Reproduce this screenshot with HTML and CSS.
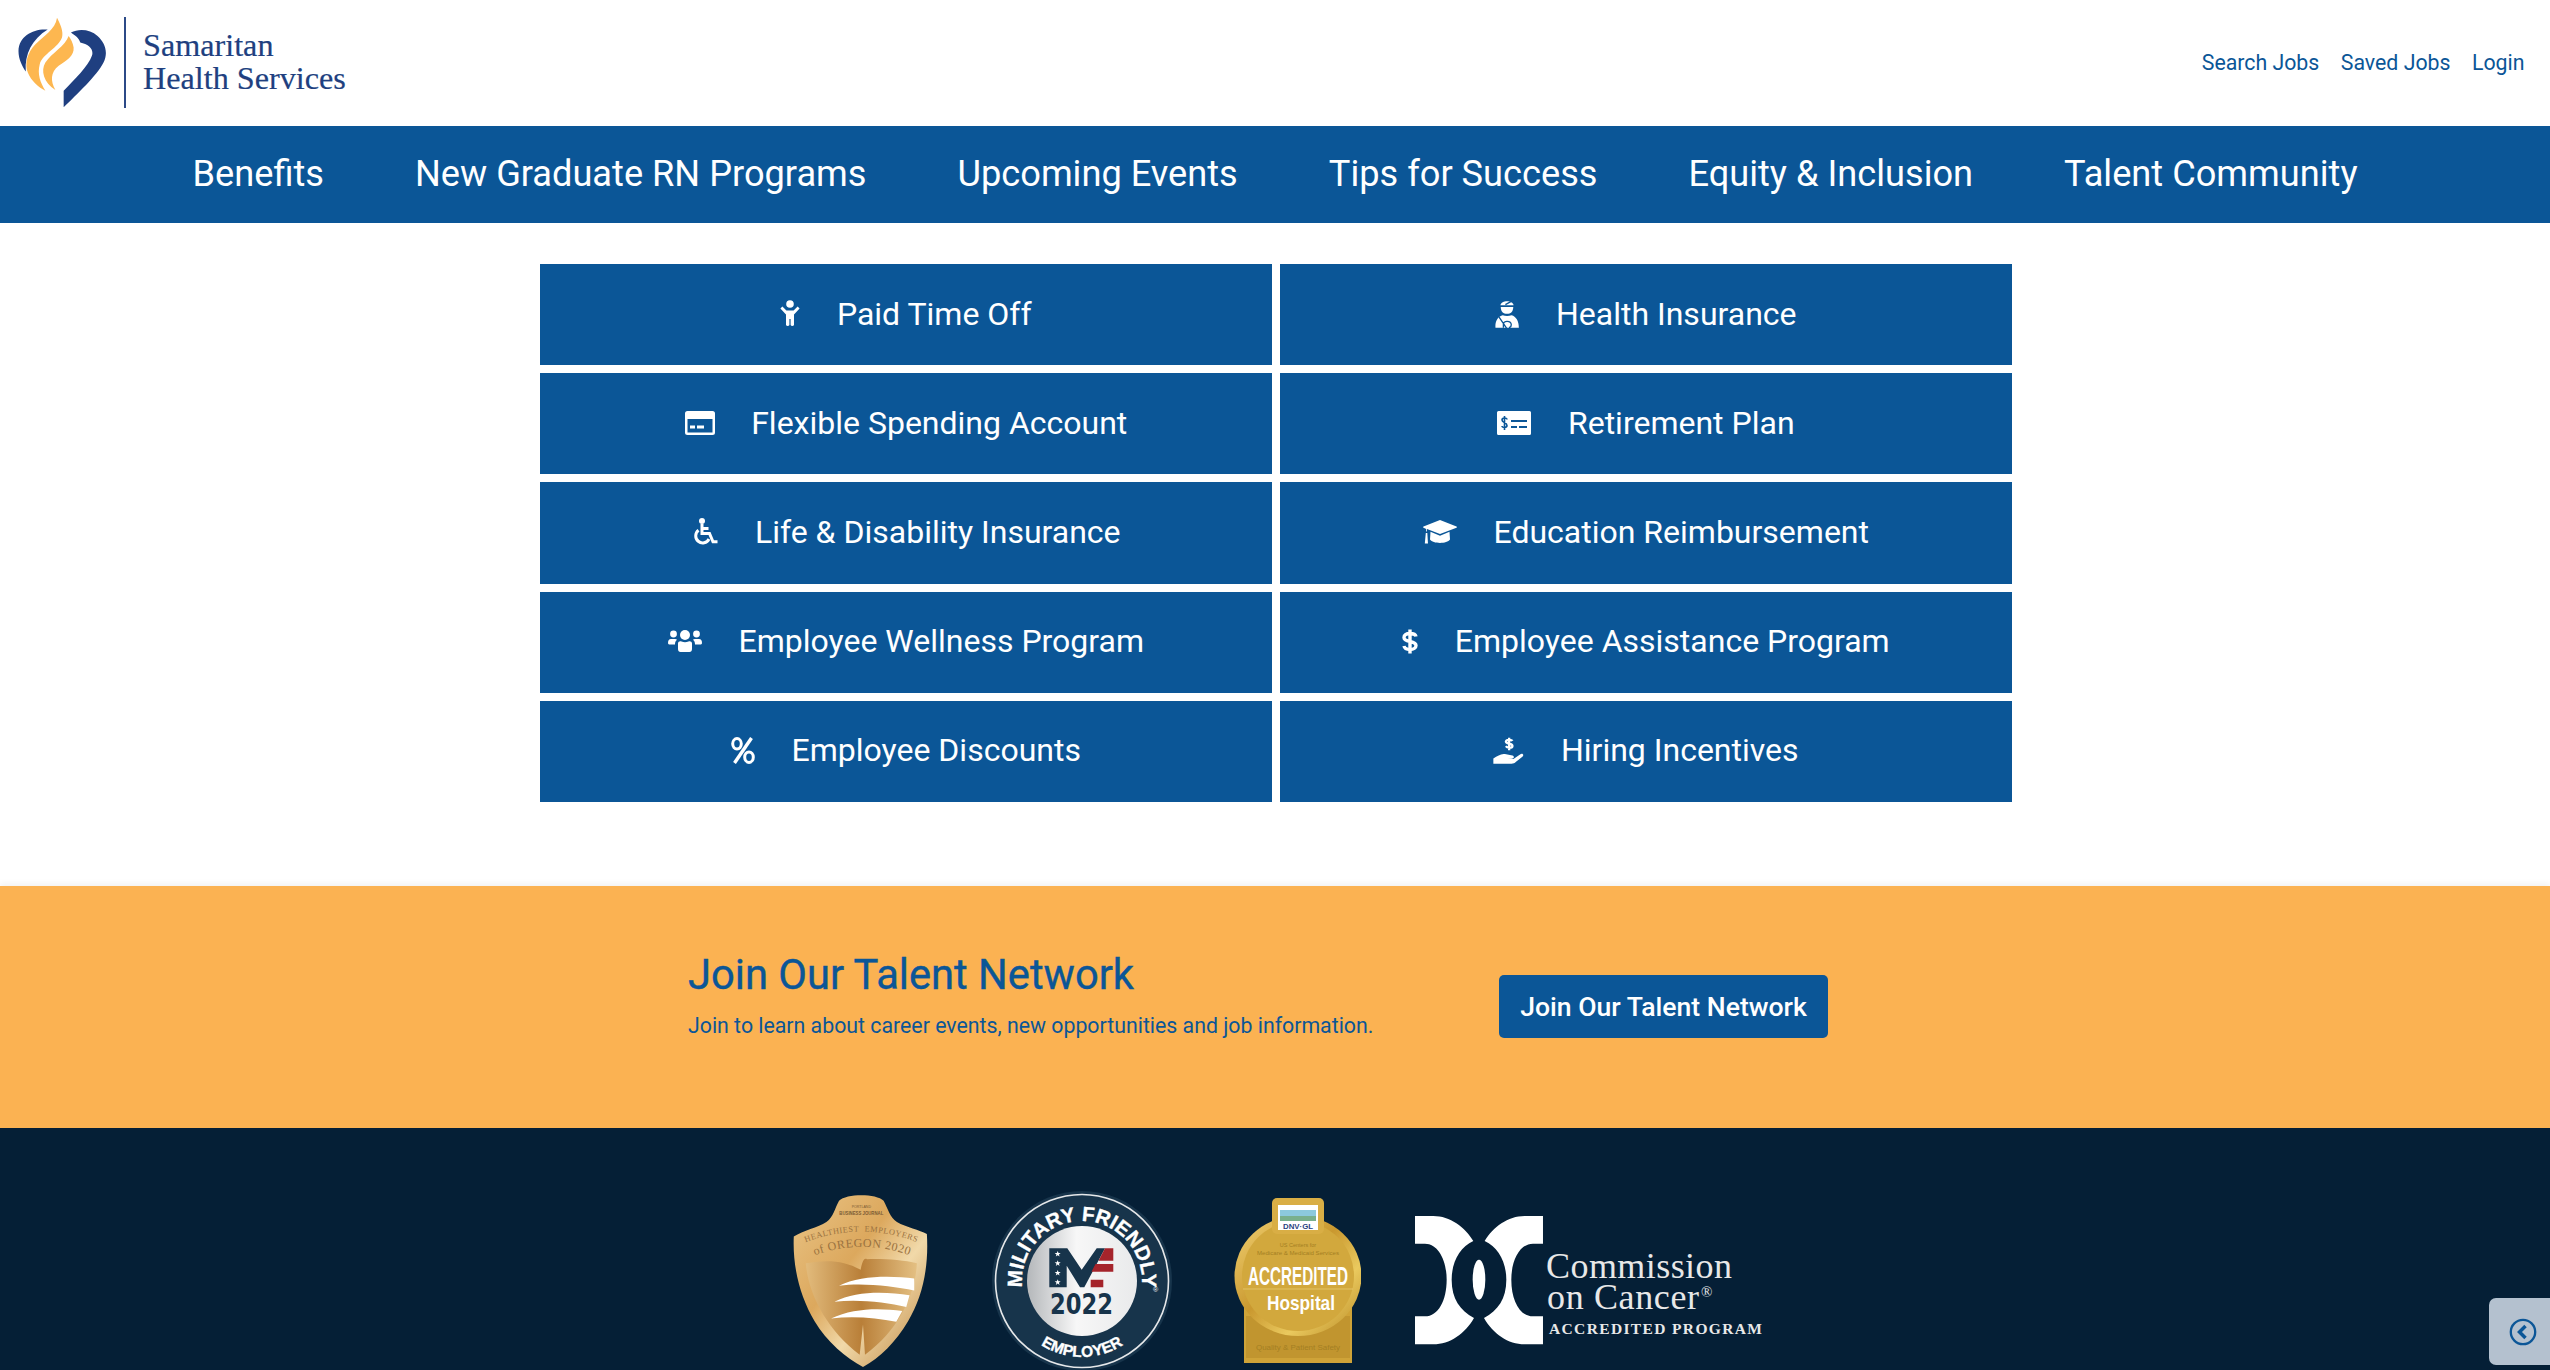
FILE: index.html
```html
<!DOCTYPE html>
<html lang="en">
<head>
<meta charset="utf-8">
<title>Benefits | Samaritan Health Services</title>
<link rel="stylesheet" href="styles.css">
</head>
<body>
<header class="topbar">
  <a class="brand" href="#">
    <svg class="brand-mark" viewBox="50 45 270 280" aria-hidden="true">
      <path class="logo-navy" d="M142 86C100 82 55 105 54 150C54 175 65 195 76 212C72 160 95 115 142 86Z"/>
      <path class="logo-gold" d="M170 50C165 85 130 105 105 130C80 155 72 190 82 215C92 240 115 260 135 270C120 245 110 220 118 190C126 160 175 140 185 110C190 90 180 70 170 50Z"/>
      <path class="logo-gold" d="M205 105C195 135 155 155 135 185C120 210 130 245 165 268C150 240 150 215 175 195C200 178 222 165 220 140C218 125 212 115 205 105Z"/>
      <path class="logo-navy" d="M212 95C235 82 270 85 292 105C315 125 325 155 310 185C290 225 230 280 190 320L190 270C220 240 265 195 275 165C282 145 265 130 240 125C235 110 225 105 212 95Z"/>
    </svg>
    <span class="brand-rule"></span>
    <span class="brand-name">Samaritan<br>Health Services</span>
  </a>
  <nav class="toplinks">
    <a href="#">Search Jobs</a>
    <a href="#">Saved Jobs</a>
    <a href="#">Login</a>
  </nav>
</header>

<nav class="mainnav">
  <a href="#">Benefits</a>
  <a href="#">New Graduate RN Programs</a>
  <a href="#">Upcoming Events</a>
  <a href="#">Tips for Success</a>
  <a href="#">Equity &amp; Inclusion</a>
  <a href="#">Talent Community</a>
</nav>

<main class="benefits">
  <div class="benefit-grid">
    <a class="benefit" href="#">
      <svg class="ic ic-child" viewBox="0 0 20 27" aria-hidden="true"><circle cx="10" cy="4" r="3.8"/><path d="M2.4 6.6L6.400 10.600H13.600L17.600 6.600L19.600 8.600L14 14.400V25A1.900 1.900 0 0 1 10.600 25V19H9.400V25A1.900 1.900 0 0 1 6 25V14.400L.4 8.600Z"/></svg>
      <span>Paid Time Off</span>
    </a>
    <a class="benefit" href="#">
      <svg class="ic ic-injured" viewBox="48 35 72 85" aria-hidden="true"><path d="M64 51C67 35 101 35 104 51Z"/><path class="ic-cut" d="M79 49L97 39"/><path d="M65 56H103C103 70 95 77 84 77C73 77 65 70 65 56Z"/><path d="M49 119C47 97 58 85 71 81C79 84 89 84 98 81C111 85 120 97 120 119Z"/><path class="ic-cut" d="M60 87L83 121M73 119V108C73 97 96 97 97 110C97 115 94 118 90 119"/></svg>
      <span>Health Insurance</span>
    </a>
    <a class="benefit" href="#">
      <svg class="ic ic-card" viewBox="0 0 30 24" aria-hidden="true"><path fill-rule="evenodd" d="M2.500 0H27.500A2.500 2.500 0 0 1 30 2.500V21.500A2.500 2.500 0 0 1 27.500 24H2.500A2.500 2.500 0 0 1 0 21.500V2.500A2.500 2.500 0 0 1 2.500 0ZM2.500 8V21.500H27.500V8ZM5 14.500H10V17.500H5ZM12 14.500H19V17.500H12Z"/></svg>
      <span>Flexible Spending Account</span>
    </a>
    <a class="benefit" href="#">
      <svg class="ic ic-check" viewBox="0 0 34 24" aria-hidden="true"><path fill-rule="evenodd" d="M1.500 0H32.500A1.500 1.500 0 0 1 34 1.500V22.500A1.500 1.500 0 0 1 32.500 24H1.500A1.500 1.500 0 0 1 0 22.500V1.500A1.500 1.500 0 0 1 1.500 0ZM14 9V11H30V9ZM14 15V17H20V15ZM22 15V17H30V15Z"/><path class="ic-cut ic-thin" d="M10 8.500C10 6.500 5 6.500 5 9C5 12 10 11 10 14.500C10 17 5 17 5 15M7.500 5V19"/></svg>
      <span>Retirement Plan</span>
    </a>
    <a class="benefit" href="#">
      <svg class="ic ic-wheel" viewBox="0 0 27 27" aria-hidden="true"><circle cx="11" cy="3" r="3"/><path class="ic-line" d="M11 6V15.500H18.500L22 23.800H26.500"/><path class="ic-line" d="M11 10.500H17.500M7.500 12.300A7 7 0 1 0 18 21"/></svg>
      <span>Life &amp; Disability Insurance</span>
    </a>
    <a class="benefit" href="#">
      <svg class="ic ic-grad" viewBox="0 0 34 27" aria-hidden="true"><path d="M17 2L33.500 8.500C34 8.800 34 9.400 33.500 9.700L17 16L4 11V13.500L3.200 13.500V11L.5 9.700C0 9.400 0 8.800.5 8.500Z"/><path d="M7.500 13.800L17 17.800L26.500 13.800L27 21.500C24 26 10 26 7 21.500Z"/><path d="M2.800 15H4.300L5 25.500H1.800Z"/></svg>
      <span>Education Reimbursement</span>
    </a>
    <a class="benefit" href="#">
      <svg class="ic ic-users" viewBox="0 0 34 24" aria-hidden="true"><circle cx="17" cy="6" r="5"/><circle cx="5.500" cy="5" r="3.400"/><circle cx="28.500" cy="5" r="3.400"/><path d="M10 14.500C10 12.500 12 12 13.500 12.500C16 13.500 18 13.500 20.500 12.500C22 12 24 12.500 24 14.500V20C24 22 23 23 21.500 23H12.500C11 23 10 22 10 20Z"/><path d="M0 14C0 11.500 1 10 3 10H7C8 10 8.600 10.300 9 10.800C7.500 12 7 13.500 7 15.500H2C1 15.500 0 15 0 14ZM34 14C34 11.500 33 10 31 10H27C26 10 25.400 10.300 25 10.800C26.500 12 27 13.500 27 15.500H32C33 15.500 34 15 34 14Z"/></svg>
      <span>Employee Wellness Program</span>
    </a>
    <a class="benefit" href="#">
      <svg class="ic ic-dollar" viewBox="0 0 16 27" aria-hidden="true"><path class="ic-line ic-heavy" d="M14 8.500C13.500 6 10.500 5.500 8 5.500C4 5.500 2 7.200 2 9.500C2 15 14 12 14 17.500C14 20 11.500 21.500 8 21.500C5 21.500 2.500 20.500 2 18M8 1.500V25.500"/></svg>
      <span>Employee Assistance Program</span>
    </a>
    <a class="benefit" href="#">
      <svg class="ic ic-percent" viewBox="0 0 24 27" aria-hidden="true"><ellipse class="ic-line" cx="6" cy="6.800" rx="4.300" ry="5.200"/><ellipse class="ic-line" cx="18" cy="20.200" rx="4.300" ry="5.200"/><path class="ic-line ic-heavy" d="M20.500 1L3.500 26"/></svg>
      <span>Employee Discounts</span>
    </a>
    <a class="benefit" href="#">
      <svg class="ic ic-hand" viewBox="27 28 92 82" aria-hidden="true"><path class="ic-line ic-dollar-small" d="M85 40C82 35 66 35 65 42C65 51 85 46 85 55C85 62 69 62 65 56M75 30V68"/><path d="M27 93C40 86 50 78 62 80L85 84C92 86 90 94 82 94H70L88 95L108 81C115 76 121 82 116 87L95 104C92 107 88 109 82 109H27Z"/></svg>
      <span>Hiring Incentives</span>
    </a>
  </div>
</main>

<section class="talent">
  <div class="talent-inner">
    <div class="talent-copy">
      <h2>Join Our Talent Network</h2>
      <p>Join to learn about career events, new opportunities and job information.</p>
    </div>
    <a class="talent-btn" href="#">Join Our Talent Network</a>
  </div>
</section>

<footer class="badges">
  <svg class="badge-shield" viewBox="100 42 405 520" role="img" aria-label="Healthiest Employers of Oregon 2020">
    <defs>
      <linearGradient id="goldShield" x1="0" x2="1" y1="0" y2="1">
        <stop offset="0" stop-color="#e9c486"/><stop offset=".4" stop-color="#dca85d"/><stop offset=".62" stop-color="#f1d9a9"/><stop offset="1" stop-color="#bd8540"/>
      </linearGradient>
      <linearGradient id="goldShieldIn" x1="0" x2="1" y1="0" y2="0">
        <stop offset="0" stop-color="#e2bb7c"/><stop offset=".5" stop-color="#b97f38"/><stop offset="1" stop-color="#e4c083"/>
      </linearGradient>
      <path id="shieldArc1" d="M135 188Q305 122 475 188"/>
      <path id="shieldArc2" d="M155 230Q305 172 460 230"/>
    </defs>
    <path fill="url(#goldShield)" d="M238 62C260 40 350 40 372 62C385 85 390 112 412 126C440 142 480 150 502 162C508 260 490 350 445 425C410 485 360 535 310 562C260 535 200 485 165 425C120 350 98 260 102 170C130 152 175 142 200 126C222 110 225 85 238 62Z"/>
    <path fill="url(#goldShieldIn)" d="M138 250C200 240 250 240 303 270C305 260 310 230 322 238C370 236 430 240 472 250C468 340 420 450 316 525L310 435L300 525C200 450 145 340 138 250Z"/>
    <path fill="#fff" d="M238 318C300 285 400 288 464 296V332C400 320 310 308 238 318ZM224 366C290 332 380 336 450 346L440 382C380 368 300 358 224 366ZM214 416C280 385 360 384 428 394L410 426C350 414 280 408 214 416Z"/>
    <text class="sh-pbj" x="305" y="84" text-anchor="middle" textLength="58" lengthAdjust="spacingAndGlyphs">PORTLAND</text>
    <text class="sh-pbj sh-bold" x="305" y="106" text-anchor="middle" textLength="132" lengthAdjust="spacingAndGlyphs">BUSINESS JOURNAL</text>
    <text class="sh-line"><textPath href="#shieldArc1" startOffset="50%" text-anchor="middle">HEALTHIEST&#160;&#160;EMPLOYERS</textPath></text>
    <text class="sh-line sh-big"><textPath href="#shieldArc2" startOffset="50%" text-anchor="middle">of OREGON 2020</textPath></text>
  </svg>

  <svg class="badge-mil" viewBox="0 0 180 180" role="img" aria-label="Military Friendly Employer 2022">
    <defs>
      <linearGradient id="silver" x1="0" x2="1" y1="0" y2="0">
        <stop offset="0" stop-color="#b4b7ba"/><stop offset=".45" stop-color="#f7f7f7"/><stop offset="1" stop-color="#e9eaeb"/>
      </linearGradient>
      <path id="milTop" d="M33.600 110.500A60 60 0 1 1 146.400 110.500"/>
      <path id="milBot" d="M41 148A76 76 0 0 0 139 148"/>
      <polygon id="milStar" points="0,-3 .8,-1 3,-1 1.200,.4 1.900,2.600 0,1.300 -1.900,2.600 -1.200,.4 -3,-1 -.8,-1"/>
    </defs>
    <circle cx="90" cy="90" r="90" fill="#17344b"/>
    <circle cx="90" cy="90" r="86.500" fill="none" stroke="#e6e8ea" stroke-width="1.600"/>
    <circle cx="90" cy="90" r="55" fill="url(#silver)"/>
    <text class="mil-arc"><textPath href="#milTop" startOffset="50%" text-anchor="middle">MILITARY FRIENDLY</textPath></text>
    <text class="mil-arc mil-arc-sm"><textPath href="#milBot" startOffset="50%" text-anchor="middle">EMPLOYER</textPath></text>
    <text class="mil-reg" x="161" y="101">®</text>
    <path fill="#17344b" d="M57.300 57.300H75.300L89.700 78.700L104.700 57.300H113L92.300 96.300H88L74.700 74.700V96.300H57.300Z"/>
    <path fill="#a5242b" d="M113 57.300H121.300V69.700H106.500ZM103.500 73H121.300V80.700H99.500ZM98.700 88.700H111.300V96.300H98.700Z"/>
    <g fill="#fff"><use href="#milStar" x="65.700" y="63"/><use href="#milStar" x="65.700" y="72.300"/><use href="#milStar" x="65.700" y="82"/><use href="#milStar" x="65.700" y="91.300"/></g>
    <text class="mil-year" x="89.500" y="123" text-anchor="middle" textLength="63" lengthAdjust="spacingAndGlyphs">2022</text>
  </svg>

  <svg class="badge-acc" viewBox="0 0 127 165" role="img" aria-label="DNV GL Accredited Hospital">
    <defs>
      <linearGradient id="goldAcc" x1="0" x2="1" y1="0" y2="1">
        <stop offset="0" stop-color="#f2d274"/><stop offset=".45" stop-color="#c9982f"/><stop offset=".7" stop-color="#eac95e"/><stop offset="1" stop-color="#b98a24"/>
      </linearGradient>
    </defs>
    <rect x="10" y="105" width="108" height="60" fill="#cfa338"/>
    <rect x="12" y="118" width="104" height="42" fill="#c1952f"/>
    <ellipse cx="64" cy="78" rx="63.500" ry="60" fill="url(#goldAcc)"/>
    <ellipse cx="64" cy="78" rx="56" ry="55" fill="#d2a83d"/>
    <rect x="38" y="0" width="52" height="36" rx="5" fill="#d9ae45"/>
    <rect x="44" y="7" width="40" height="25" fill="#fff"/>
    <rect x="46" y="12" width="36" height="6" fill="#8cc9dc"/>
    <rect x="46" y="18" width="36" height="5" fill="#79b08c"/>
    <text class="acc-dnv" x="64" y="30.500" text-anchor="middle" textLength="30" lengthAdjust="spacingAndGlyphs">DNV·GL</text>
    <text class="acc-tiny" x="64" y="49" text-anchor="middle">US Centers for</text>
    <text class="acc-tiny" x="64" y="57" text-anchor="middle" textLength="82" lengthAdjust="spacingAndGlyphs">Medicare &amp; Medicaid Services</text>
    <text class="acc-main" x="64" y="87" text-anchor="middle" textLength="100" lengthAdjust="spacingAndGlyphs">ACCREDITED</text>
    <path d="M9 91H119" stroke="#e7c96f" stroke-width=".8"/>
    <text class="acc-sub" x="67" y="112" text-anchor="middle" textLength="68" lengthAdjust="spacingAndGlyphs">Hospital</text>
    <text class="acc-qual" x="64" y="152" text-anchor="middle" textLength="84" lengthAdjust="spacingAndGlyphs">Quality &amp; Patient Safety</text>
  </svg>

  <svg class="badge-coc" viewBox="0 0 347 129" role="img" aria-label="Commission on Cancer Accredited Program">
    <defs>
      <path id="cocHalf" d="M30 37H85C135 37 180 70 205 112C165 130 140 175 140 228C140 285 165 320 207 343C180 390 135 422 85 422H30V338H60C100 338 125 290 125 228C125 170 100 120 60 120H30Z"/>
    </defs>
    <g transform="scale(.3333) translate(-30 -37)" fill="#fff">
      <use href="#cocHalf"/>
      <use href="#cocHalf" transform="translate(444 0) scale(-1 1)"/>
      <ellipse cx="222" cy="228" rx="19" ry="60"/>
    </g>
    <text class="coc-name" x="131" y="62" textLength="186">Commission</text>
    <text class="coc-name" x="132" y="93" textLength="152">on Cancer</text>
    <text class="coc-reg" x="286" y="81">®</text>
    <text class="coc-prog" x="134" y="118" textLength="213">ACCREDITED PROGRAM</text>
  </svg>
</footer>

<button class="side-toggle" type="button" aria-label="Open panel">
  <svg viewBox="0 0 28 28" aria-hidden="true"><circle cx="14" cy="14" r="12.200"/><path class="side-chev" d="M16.500 8L10.500 14L16.500 20"/></svg>
</button>
</body>
</html>
```
FILE: styles.css
```css
* { box-sizing: border-box; }
html, body { margin: 0; padding: 0; height: 1370px; overflow: hidden; }
body { font-family: Roboto, "Liberation Sans", sans-serif; background: #fff; color: #0b5697; }
a { text-decoration: none; color: inherit; }

.topbar { height: 126px; display: flex; justify-content: space-between; align-items: center; padding: 0 25.500px 2px 17px; }
.brand { display: flex; align-items: center; }
.brand-mark { width: 90px; height: 93px; display: block; }
.logo-navy { fill: #1f3f80; }
.logo-gold { fill: #fdb750; }
.brand-rule { width: 2px; height: 91px; background: #2c4a87; margin: 0 17px 0 17px; }
.brand-name { font-family: "Liberation Serif", serif; font-size: 32.200px; line-height: 33px; color: #203f7f; -webkit-text-stroke: .2px #203f7f; }
.toplinks { display: flex; gap: 21.500px; font-size: 21.300px; align-items: center; }

.mainnav { height: 97px; padding-bottom: 3px; background: #0b5697; display: flex; justify-content: center; align-items: center; }
.mainnav a { color: #fff; font-size: 36.200px; padding: 0 45.500px; }

.benefits { padding: 41px 0 84px 2px; }
.benefit-grid { width: 1472px; margin: 0 auto; display: grid; grid-template-columns: 732px 732px; grid-auto-rows: 101.200px; gap: 8px; }
.benefit { background: #0b5697; color: #fff; font-size: 32px; padding-bottom: 2px; display: flex; justify-content: center; align-items: center; gap: 36.500px; }
.ic { display: block; fill: #fff; flex: none; }
.ic-child { width: 20px; height: 27px; }
.ic-injured { width: 24px; height: 28px; }
.ic-card { width: 30px; height: 24px; }
.ic-check { width: 34px; height: 24px; }
.ic-wheel { width: 27px; height: 27px; }
.ic-grad { width: 34px; height: 27px; }
.ic-users { width: 34px; height: 24px; }
.ic-dollar { width: 16px; height: 27px; }
.ic-percent { width: 24px; height: 27px; }
.ic-hand { width: 31px; height: 27px; }
.ic-cut { fill: none; stroke: #0b5697; stroke-width: 4; }
.ic-thin { stroke-width: 1.600; }
.ic-line { fill: none; stroke: #fff; stroke-width: 3; }
.ic-heavy { stroke-width: 3.400; }
.ic-dollar-small { stroke-width: 7; }

.talent { height: 242px; background: #fbb252; box-shadow: 0 -3px 6px rgba(0, 0, 0, .05); display: flex; align-items: center; position: relative; }
.talent-inner { margin-left: 688px; display: flex; align-items: center; width: 1140px; justify-content: space-between; }
.talent-copy { padding-bottom: 24px; }
.talent-copy h2 { margin: 0 0 13px; font-size: 41.700px; font-weight: 400; line-height: 50px; -webkit-text-stroke: .4px #0b5697; }
.talent-copy p { margin: 0; font-size: 21.300px; line-height: 26px; }
.talent-btn { width: 329px; height: 63px; border-radius: 5px; background: #0b5697; color: #fff; font-size: 26.600px; font-weight: 500; display: flex; align-items: center; justify-content: center; }

.badges { height: 242px; background: #051f36; padding: 64px 0 0 5px; display: flex; justify-content: center; align-items: center; gap: 54px; }
.badges svg { display: block; flex: none; }
.badge-shield { width: 135px; height: 173px; margin-right: 10px; }
.badge-mil { width: 180px; height: 180px; margin-right: 8px; }
.badge-acc { width: 127px; height: 165px; }
.badge-coc { width: 347px; height: 129px; }

.sh-pbj { font-family: "Liberation Sans", sans-serif; font-size: 13px; fill: #7b5a33; }
.sh-bold { font-weight: 700; font-size: 15px; }
.sh-line { font-family: "Liberation Serif", serif; font-size: 25px; fill: #9a7240; letter-spacing: 1.500px; }
.sh-big { font-size: 36px; }

.mil-arc { font-family: "Liberation Sans", sans-serif; font-weight: 700; font-size: 20.500px; fill: #fff; stroke: #fff; stroke-width: .35px; }
.mil-arc-sm { font-size: 15.500px; }
.mil-reg { font-family: "Liberation Sans", sans-serif; font-size: 7px; fill: #fff; }
.mil-year { font-family: "DejaVu Sans", sans-serif; font-weight: 700; font-size: 27.500px; fill: #17344b; }

.acc-dnv { font-family: "Liberation Sans", sans-serif; font-weight: 700; font-size: 6.500px; fill: #2a3f7f; }
.acc-tiny, .acc-qual { font-family: "Liberation Sans", sans-serif; font-size: 5.500px; fill: #a47f23; }
.acc-qual { font-size: 8px; }
.acc-main { font-family: "Liberation Sans", sans-serif; font-weight: 700; font-size: 25px; fill: #fff; }
.acc-sub { font-family: "Liberation Sans", sans-serif; font-weight: 700; font-size: 21px; fill: #fff; }

.coc-name { font-family: "Liberation Serif", serif; font-size: 36px; fill: #e8e8e8; }
.coc-reg { font-family: "Liberation Serif", serif; font-size: 15px; fill: #e8e8e8; }
.coc-prog { font-family: "Liberation Serif", serif; font-weight: 700; font-size: 15.500px; fill: #e8e8e8; }

.side-toggle { position: fixed; right: 0; top: 1298px; width: 61px; height: 67px; border: 0; padding: 0 0 0 20px; background: #b4c1cf; border-radius: 7px 0 0 7px; display: flex; align-items: center; }
.side-toggle svg { width: 28px; height: 28px; display: block; fill: none; stroke: #0b5697; stroke-width: 2.300; }
.side-toggle .side-chev { stroke-width: 3.500; }
```
